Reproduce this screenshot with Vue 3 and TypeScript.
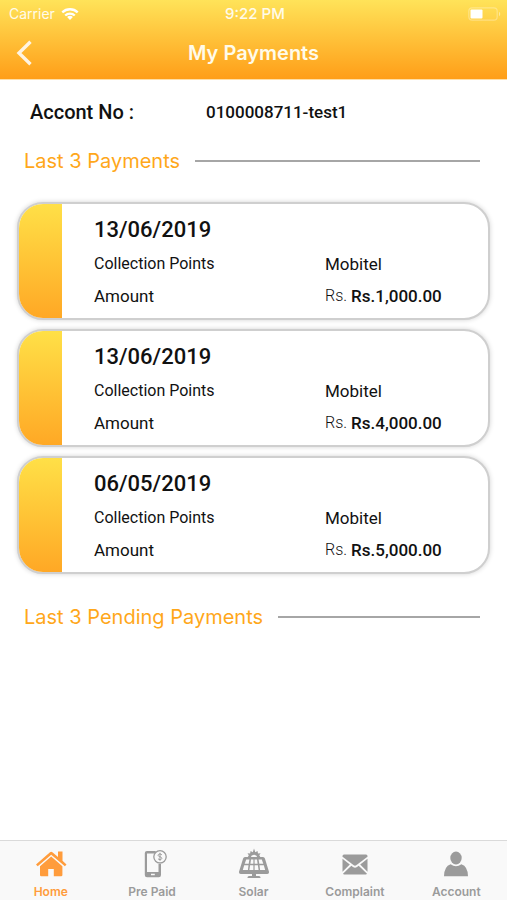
<script setup lang="ts">
interface Payment {
  date: string
  point: string
  amount: string
}

interface Tab {
  id: 'home' | 'prepaid' | 'solar' | 'complaint' | 'account'
  label: string
}

const payments: Payment[] = [
  { date: '13/06/2019', point: 'Mobitel', amount: 'Rs.1,000.00' },
  { date: '13/06/2019', point: 'Mobitel', amount: 'Rs.4,000.00' },
  { date: '06/05/2019', point: 'Mobitel', amount: 'Rs.5,000.00' },
]

const tabs: Tab[] = [
  { id: 'home', label: 'Home' },
  { id: 'prepaid', label: 'Pre Paid' },
  { id: 'solar', label: 'Solar' },
  { id: 'complaint', label: 'Complaint' },
  { id: 'account', label: 'Account' },
]

const activeTab: Tab['id'] = 'home'
</script>

<template>
  <div class="screen">
    <header class="top">
      <div class="status">
        <div class="carrier">
          <span>Carrier</span>
          <svg width="18" height="14" viewBox="0 0 18 14" fill="none" stroke="currentColor" stroke-width="2.3" aria-hidden="true">
            <path d="M1.3 5.4a11 11 0 0 1 15.4 0" />
            <path d="M4.2 8.5a6.9 6.9 0 0 1 9.6 0" />
            <path d="M9 13l-2.9-2.9a4.1 4.1 0 0 1 5.8 0z" fill="currentColor" stroke="none" />
          </svg>
        </div>
        <span class="clock">9:22 PM</span>
        <div class="power">
          <svg width="33" height="14" viewBox="0 0 33 14" aria-hidden="true">
            <rect x="0.8" y="0.8" width="28.4" height="12.4" rx="3.4" fill="none" stroke="#fff" stroke-opacity="0.3" stroke-width="1.2" />
            <rect x="2.5" y="2.5" width="12" height="9" rx="1" fill="#fff" />
            <path d="M31 4.8c1.7.8 1.7 3.6 0 4.4z" fill="#fff" fill-opacity="0.45" />
          </svg>
        </div>
      </div>
      <div class="navbar">
        <button class="back" type="button" aria-label="Back">
          <svg width="18" height="28" viewBox="0 0 18 28" fill="none" stroke="currentColor" stroke-width="3.4" aria-hidden="true">
            <path d="M15.5 2.800L4 14l11.500 11.200" />
          </svg>
        </button>
        <h1>My Payments</h1>
      </div>
    </header>

    <main class="content">
      <div class="account">
        <span class="account-label">Accont No :</span>
        <span class="account-number">0100008711-test1</span>
      </div>

      <h2 class="section">Last 3 Payments</h2>
      <ul class="cards">
        <li v-for="(p, i) in payments" :key="i" class="card">
          <div class="stripe"></div>
          <div class="details">
            <h3>{{ p.date }}</h3>
            <dl>
              <dt class="point-label">Collection Points</dt>
              <dd>{{ p.point }}</dd>
              <dt>Amount</dt>
              <dd class="amount"><span class="currency">Rs.</span>{{ p.amount }}</dd>
            </dl>
          </div>
        </li>
      </ul>

      <h2 class="section">Last 3 Pending Payments</h2>
    </main>

    <nav class="tabs">
      <a v-for="tab in tabs" :key="tab.id" href="#" class="tab" :class="{ active: tab.id === activeTab }">
        <svg width="32" height="32" viewBox="0 0 32 32" fill="currentColor" aria-hidden="true">
          <template v-if="tab.id === 'home'">
            <path d="M16.200 8.500L5 18.300v8.700q0 1.300 1.300 1.300H13.200V21h5.600v7.300h7.300q1.300 0 1.300-1.300v-8.700z" />
            <path d="M23 3.600h4.500v9.200l4 3.600-1.600 1.800L16.200 6.700 2.700 18.200l-1.700-1.800L15 4.200q1.200-1 2.400 0L23 8.900z" />
          </template>
          <template v-else-if="tab.id === 'prepaid'">
            <path fill-rule="evenodd" d="M11 3h9l-1.500 2.500H11V24h11.500v-8H25v11q0 2.200-2.200 2.200H11Q8.800 29.200 8.800 27V5q0-2 2.200-2zM15 25.700v1.600h3.800v-1.600z" />
            <circle cx="24" cy="8.800" r="6.200" fill="none" stroke="currentColor" stroke-width="1.300" />
            <path d="M25.900 6.900q-.8-.9-1.900-.9c-2.600 0-2.400 2.400 0 2.800s2.400 2.800 0 2.800q-1.200 0-2-.9M24 4.800v8" fill="none" stroke="currentColor" stroke-width="1" />
          </template>
          <template v-else-if="tab.id === 'solar'">
            <path d="M9.500 9.500l1.300-2.200-1.300-2 2.600.2.500-2.500 2.200 1.200L16 0.500l1.300 3.700 2.200-1.200.5 2.500 2.600-.2-1.300 2 1.300 2.200h-3.200a3.500 3.500 0 0 0-6.800 0z" />
            <path d="M7 9h18q1.500 0 1.900 1.500L31 23.700Q31.300 26 29.300 26H2.700Q.7 26 1 23.700l4.100-13.200Q5.500 9 7 9z" />
            <path class="cell" d="M8.200 11.500h3.200l-.7 4.300H6.700zM13 11.500h2.400v4.300h-3zM16.600 11.500H19l.6 4.300h-3zM20.600 11.500h3.200l1.500 4.300h-4zM6.200 17.300h4.300l-.6 4.700H4.800zM12.100 17.300h3.300V22h-4zM16.600 17.300h3.300l.7 4.700h-4zM21.500 17.300h4.300l1.400 4.700h-5.100z" />
            <path d="M14 26h4v2h3q1.500 0 1.500 1.500V30h-13v-.5Q9.500 28 11 28h3z" />
          </template>
          <template v-else-if="tab.id === 'complaint'">
            <path d="M5 6.500h22q1.500 0 1.500 1.500v.8L17.200 17.300q-1.200.9-2.400 0L3.500 8.800V8q0-1.500 1.500-1.500z" />
            <path d="M3.500 10.800l7.300 5.800-7.300 7.200zM28.500 10.800l-7.300 5.800 7.300 7.200zM12.300 17.800l1.700 1.300q2 1.400 4 0l1.700-1.300 8.300 8q-.4.600-1.200.6H5.200q-.8 0-1.200-.6z" />
          </template>
          <template v-else>
            <ellipse cx="16" cy="10" rx="5.700" ry="6.400" />
            <path d="M10.600 16.200q5.400 4 10.800 0Q28 18.500 28 28.300H4q0-9.800 6.600-12.100z" />
          </template>
        </svg>
        <span>{{ tab.label }}</span>
      </a>
    </nav>
  </div>
</template>

<style>
body {
  margin: 0;
  background: #fff;
}
</style>

<style scoped>
.screen {
  display: flex;
  flex-direction: column;
  min-height: 100vh;
  font-family: Roboto, "Liberation Sans", sans-serif;
  color: #111;
}

.top {
  background: linear-gradient(#ffe359, #ff9e18);
  border-bottom: 1px solid #ffdfa6;
  color: #fffbea;
  font-family: Inter, "Liberation Sans", sans-serif;
}

.status {
  display: grid;
  grid-template-columns: 1fr auto 1fr;
  align-items: center;
  height: 27px;
  padding: 0 6px 0 9px;
  font-size: 14px;
}

.carrier {
  display: flex;
  align-items: center;
  gap: 6px;
}

.carrier svg {
  color: #fff;
}

.clock {
  font-size: 15px;
  font-weight: 500;
}

.power {
  display: flex;
  justify-content: flex-end;
}

.navbar {
  display: grid;
  grid-template-columns: 48px 1fr 48px;
  align-items: center;
  height: 52px;
}

.back {
  display: flex;
  justify-content: center;
  padding: 0;
  border: 0;
  background: none;
  color: #fff4e2;
}

h1 {
  margin: 0;
  font-size: 20px;
  font-weight: 600;
  line-height: 24px;
  text-align: center;
}

.content {
  flex: 1;
  padding: 19px 17px 24px;
}

.account {
  display: grid;
  grid-template-columns: 176px 1fr;
  align-items: center;
  padding-left: 13px;
  line-height: 26px;
  font-weight: 500;
}

.account-label {
  font-size: 20px;
}

.account-number {
  font-size: 17px;
}

.section {
  display: flex;
  align-items: center;
  gap: 15px;
  margin: 23px 10px 28px 7px;
  font-family: Inter, "Liberation Sans", sans-serif;
  font-size: 20px;
  font-weight: 400;
  line-height: 26px;
  color: #ffa71a;
}

.cards + .section {
  margin-top: 30px;
}

.section::after {
  content: "";
  flex: 1;
  height: 2px;
  background: #a6a6a6;
}

.cards {
  display: flex;
  flex-direction: column;
  gap: 9px;
  margin: 0;
  padding: 0;
  list-style: none;
}

.card {
  display: flex;
  height: 114px;
  overflow: hidden;
  border: 2px solid #cfcfcf;
  border-radius: 26px;
  background: #fff;
  box-shadow: 0 0 5px rgba(0, 0, 0, 0.18);
}

.stripe {
  flex: none;
  width: 43px;
  background: linear-gradient(#ffe047, #ffa825);
}

.details {
  flex: 1;
  padding: 12px 0 0 32px;
}

h3 {
  margin: 0;
  font-size: 22px;
  font-weight: 500;
  line-height: 28px;
}

dl {
  display: grid;
  grid-template-columns: 231px 1fr;
  margin: 4px 0 0;
  font-size: 17px;
  line-height: 32px;
}

dt,
dd {
  margin: 0;
}

.point-label {
  font-size: 16px;
}

.amount {
  display: flex;
  gap: 4px;
  font-weight: 500;
}

.currency {
  font-size: 16px;
  font-weight: 300;
}

.tabs {
  display: flex;
  height: 59px;
  border-top: 1px solid #dadada;
  background: #f9f9f9;
  font-family: Inter, "Liberation Sans", sans-serif;
}

.tab {
  display: flex;
  flex: 1;
  flex-direction: column;
  align-items: center;
  gap: 4px;
  padding-top: 7px;
  color: #9b9b9b;
  font-size: 12px;
  font-weight: 600;
  line-height: 16px;
  text-decoration: none;
}

.tab.active {
  color: #ff9c3c;
}

.cell {
  fill: #f9f9f9;
}
</style>
